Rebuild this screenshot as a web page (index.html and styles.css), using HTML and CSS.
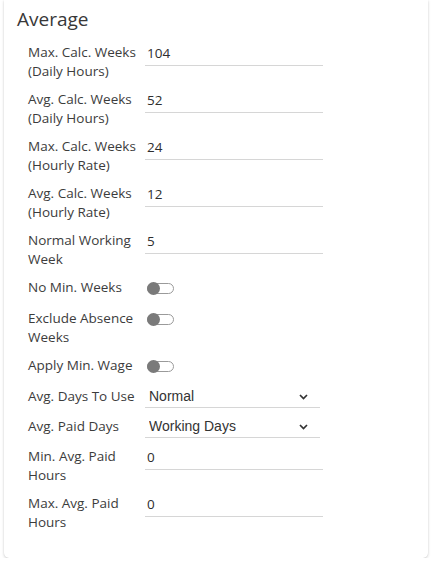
FILE: index.html
```html
<!DOCTYPE html>
<html>
<head>
<meta charset="utf-8">
<link rel="stylesheet" href="styles.css">
</head>
<body>
<div class="card">
  <h2 class="title">Average</h2>
  <div class="form">
    <label class="lbl">Max. Calc. Weeks (Daily Hours)</label>
    <div class="field"><input class="txt" value="104"></div>

    <label class="lbl">Avg. Calc. Weeks (Daily Hours)</label>
    <div class="field"><input class="txt" value="52"></div>

    <label class="lbl">Max. Calc. Weeks (Hourly Rate)</label>
    <div class="field"><input class="txt" value="24"></div>

    <label class="lbl">Avg. Calc. Weeks (Hourly Rate)</label>
    <div class="field"><input class="txt" value="12"></div>

    <label class="lbl">Normal Working Week</label>
    <div class="field"><input class="txt" value="5"></div>

    <label class="lbl">No Min. Weeks</label>
    <div class="field tog-field"><span class="toggle"><span class="knob"></span></span></div>

    <label class="lbl">Exclude Absence Weeks</label>
    <div class="field tog-field"><span class="toggle"><span class="knob"></span></span></div>

    <label class="lbl">Apply Min. Wage</label>
    <div class="field tog-field"><span class="toggle"><span class="knob"></span></span></div>

    <label class="lbl">Avg. Days To Use</label>
    <div class="field sel-wrap">
      <select class="sel"><option>Normal</option></select>
      <svg class="chev" width="9" height="6" viewBox="0 0 9 6"><path d="M1 1 L4.5 4.5 L8 1" fill="none" stroke="#333" stroke-width="1.7"/></svg>
    </div>

    <label class="lbl">Avg. Paid Days</label>
    <div class="field sel-wrap">
      <select class="sel"><option>Working Days</option></select>
      <svg class="chev" width="9" height="6" viewBox="0 0 9 6"><path d="M1 1 L4.5 4.5 L8 1" fill="none" stroke="#333" stroke-width="1.7"/></svg>
    </div>

    <label class="lbl">Min. Avg. Paid Hours</label>
    <div class="field"><input class="txt" value="0"></div>

    <label class="lbl">Max. Avg. Paid Hours</label>
    <div class="field"><input class="txt" value="0"></div>
  </div>
</div>
</body>
</html>
```

FILE: styles.css
```css
html, body {
  margin: 0;
  padding: 0;
  background: #ffffff;
}
body {
  font-family: "Open Sans", "Noto Sans", sans-serif;
  color: #3a3a3a;
}
.card {
  width: 424px;
  margin: 0 0 0 4px;
  padding: 6px 0 26px 13px;
  box-sizing: border-box;
  background: #fff;
  border-radius: 0 0 5px 5px;
  box-shadow: 0 1px 3px rgba(0,0,0,0.18), 0 0 1px rgba(0,0,0,0.12);
}
.title {
  margin: 0;
  font-size: 19px;
  font-weight: 400;
  line-height: 26px;
  color: #383838;
}
.form {
  display: grid;
  grid-template-columns: 117px 178px;
  row-gap: 9px;
  margin: 11px 0 0 11px;
}
.lbl {
  font-size: 13.5px;
  line-height: 19px;
  color: #3c3c3c;
}
.field {
  position: relative;
  min-height: 21px;
}
.tog-field {
  min-height: 22px;
}
.txt {
  display: block;
  width: 178px;
  height: 23px;
  box-sizing: border-box;
  border: 0;
  border-bottom: 1px solid #d6d6d6;
  padding: 0 2px 2px;
  margin: 0;
  font-family: "Open Sans", "Noto Sans", sans-serif;
  font-size: 13.5px;
  color: #2e2e2e;
  background: transparent;
  outline: none;
}
.toggle {
  display: block;
  position: relative;
  width: 27px;
  height: 11px;
  margin: 5px 0 0 2px;
  border: 1px solid #9a9a9a;
  border-radius: 7px;
  box-sizing: border-box;
}
.knob {
  position: absolute;
  left: -1px;
  top: -2px;
  width: 13px;
  height: 13px;
  border-radius: 50%;
  background: #7a7a7a;
}
.sel-wrap {
  width: 175px;
}
.sel {
  display: block;
  width: 175px;
  height: 21px;
  appearance: none;
  -webkit-appearance: none;
  border: 0;
  border-bottom: 1px solid #d6d6d6;
  border-radius: 0;
  padding: 0 4px 2px;
  margin: 0;
  font-family: "Liberation Sans", Arial, sans-serif;
  font-size: 14px;
  color: #333;
  background: transparent;
  outline: none;
}
.chev {
  position: absolute;
  right: 12px;
  top: 7px;
  pointer-events: none;
}
```
